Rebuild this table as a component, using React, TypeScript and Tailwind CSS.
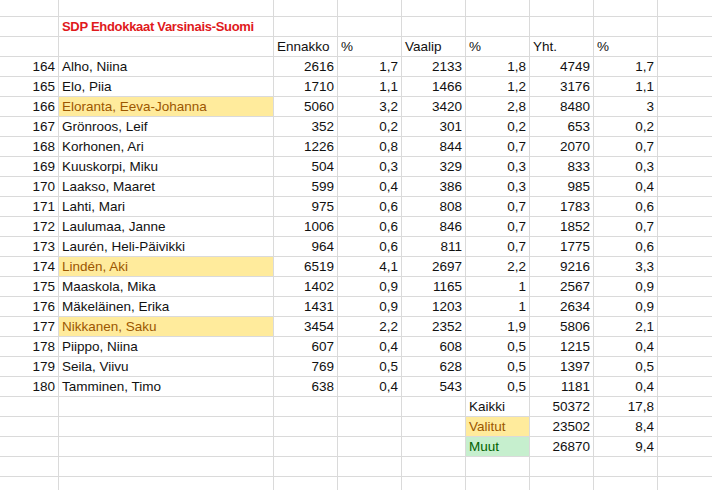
import React from "react";

type Row = [number, string, number, string, number, string, number, string, boolean?];

const rows: Row[] = [
  [164, "Alho, Niina", 2616, "1,7", 2133, "1,8", 4749, "1,7"],
  [165, "Elo, Piia", 1710, "1,1", 1466, "1,2", 3176, "1,1"],
  [166, "Eloranta, Eeva-Johanna", 5060, "3,2", 3420, "2,8", 8480, "3", true],
  [167, "Grönroos, Leif", 352, "0,2", 301, "0,2", 653, "0,2"],
  [168, "Korhonen, Ari", 1226, "0,8", 844, "0,7", 2070, "0,7"],
  [169, "Kuuskorpi, Miku", 504, "0,3", 329, "0,3", 833, "0,3"],
  [170, "Laakso, Maaret", 599, "0,4", 386, "0,3", 985, "0,4"],
  [171, "Lahti, Mari", 975, "0,6", 808, "0,7", 1783, "0,6"],
  [172, "Laulumaa, Janne", 1006, "0,6", 846, "0,7", 1852, "0,7"],
  [173, "Laurén, Heli-Päivikki", 964, "0,6", 811, "0,7", 1775, "0,6"],
  [174, "Lindén, Aki", 6519, "4,1", 2697, "2,2", 9216, "3,3", true],
  [175, "Maaskola, Mika", 1402, "0,9", 1165, "1", 2567, "0,9"],
  [176, "Mäkeläinen, Erika", 1431, "0,9", 1203, "1", 2634, "0,9"],
  [177, "Nikkanen, Saku", 3454, "2,2", 2352, "1,9", 5806, "2,1", true],
  [178, "Piippo, Niina", 607, "0,4", 608, "0,5", 1215, "0,4"],
  [179, "Seila, Viivu", 769, "0,5", 628, "0,5", 1397, "0,5"],
  [180, "Tamminen, Timo", 638, "0,4", 543, "0,5", 1181, "0,4"],
];

// a plain grid cell; right-aligned for numbers
function Cell({
  children,
  right,
  className = "",
}: {
  children?: React.ReactNode;
  right?: boolean;
  className?: string;
}) {
  return (
    <div
      className={`flex items-end whitespace-nowrap px-[3px] pb-[1px] leading-[17px] ${
        right ? "justify-end" : "justify-start"
      } ${className || "bg-white"}`}
    >
      {children}
    </div>
  );
}

const empty = (n: number, key: string) =>
  Array.from({ length: n }, (_, i) => <Cell key={`${key}-${i}`} />);

export default function App() {
  return (
    <div className="h-[490px] w-[712px] overflow-hidden bg-white">
      <div
        className="bg-[#dadada] text-[13.5px] text-[#111]"
        style={{ fontFamily: '"Liberation Sans", Arial, sans-serif' }}
      >
        <div className="grid grid-cols-[58px_214px_repeat(7,63px)] grid-rows-[16px_repeat(24,19px)] gap-px">
          {/* row 1 */}
          {empty(9, "r1")}

          {/* title */}
          <Cell />
          <Cell className="bg-white text-[13px] font-bold tracking-[-0.3px] text-[#e0191c]">
            SDP Ehdokkaat Varsinais-Suomi
          </Cell>
          {empty(7, "r2")}

          {/* headers */}
          <Cell />
          <Cell />
          <Cell>Ennakko</Cell>
          <Cell>%</Cell>
          <Cell>Vaalip</Cell>
          <Cell>%</Cell>
          <Cell>Yht.</Cell>
          <Cell>%</Cell>
          <Cell />

          {rows.map((r) => (
            <React.Fragment key={r[0]}>
              <Cell right>{r[0]}</Cell>
              <Cell className={r[8] ? "bg-[#ffeb9c] text-[#9c5700]" : ""}>{r[1]}</Cell>
              <Cell right>{r[2]}</Cell>
              <Cell right>{r[3]}</Cell>
              <Cell right>{r[4]}</Cell>
              <Cell right>{r[5]}</Cell>
              <Cell right>{r[6]}</Cell>
              <Cell right>{r[7]}</Cell>
              <Cell />
            </React.Fragment>
          ))}

          {/* totals */}
          {empty(5, "k")}
          <Cell>Kaikki</Cell>
          <Cell right>50372</Cell>
          <Cell right>17,8</Cell>
          <Cell />

          {empty(5, "v")}
          <Cell className="bg-[#ffeb9c] text-[#9c5700]">Valitut</Cell>
          <Cell right>23502</Cell>
          <Cell right>8,4</Cell>
          <Cell />

          {empty(5, "m")}
          <Cell className="bg-[#c6efce] text-[#006100]">Muut</Cell>
          <Cell right>26870</Cell>
          <Cell right>9,4</Cell>
          <Cell />

          {empty(18, "e")}
        </div>
      </div>
    </div>
  );
}
